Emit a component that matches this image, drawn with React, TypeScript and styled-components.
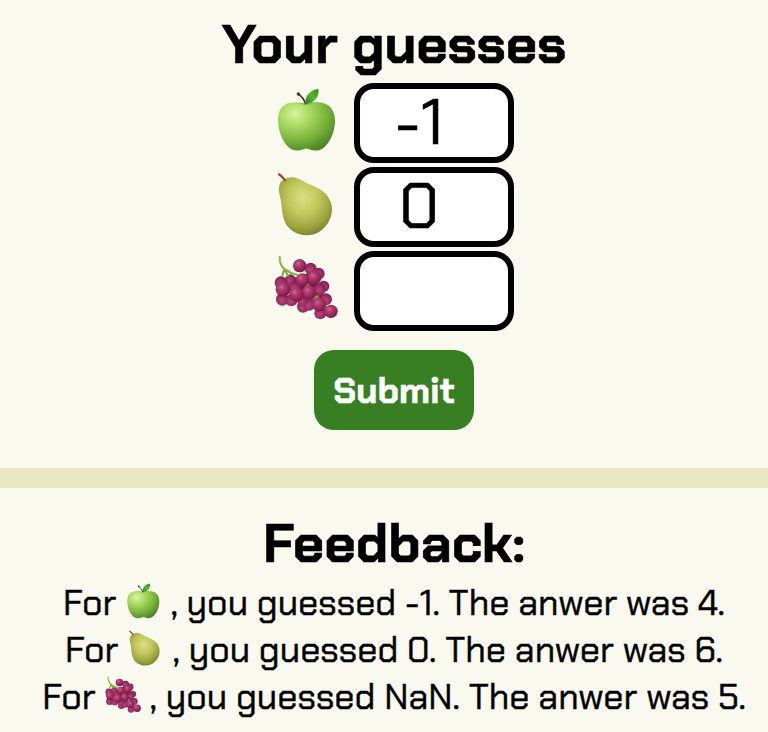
import React from "react";
import styled, { createGlobalStyle } from "styled-components";

const GlobalStyle = createGlobalStyle`
  html, body { margin: 0; padding: 0; background: #faf9f0; overflow: hidden; }
  * { box-sizing: border-box; }
`;

const Page = styled.main`
  width: 788px;
  height: 732px;
  overflow: hidden;
  color: #000;
  background: #faf9f0;
  font-family: "Chakra Petch", Roboto, "Liberation Sans", sans-serif;
`;

const Guesses = styled.section`
  height: 468px;
  display: flex;
  flex-direction: column;
  align-items: center;
`;

const Title = styled.h2<{ $top: number }>`
  margin: ${(p) => p.$top}px 0 0;
  height: 70px;
  font-size: 54px;
  line-height: 70px;
  font-weight: 700;
  white-space: nowrap;
  -webkit-text-stroke: 0.6px #000;
`;

const Rows = styled.div`
  display: flex;
  flex-direction: column;
  gap: 4px;
  margin: 3px 0 19px;
  width: 240px;
`;

const Row = styled.label`
  display: flex;
  justify-content: space-between;
  height: 80px;
`;

const RowIcon = styled.span`
  display: block;
  height: 64px;
  margin-top: 5px;
`;

const NumberField = styled.input`
  width: 160px;
  height: 80px;
  padding: 0 30px 2px 0;
  border: 6px solid #000;
  border-radius: 20px;
  background: #fff;
  color: #000;
  outline: none;
  text-align: center;
  font-family: inherit;
  font-size: 64px;
  -webkit-text-stroke: 0.6px #000;
`;

const Submit = styled.button`
  width: 160px;
  height: 80px;
  padding: 0;
  border: 0;
  border-radius: 20px;
  background: #377f22;
  color: #fff;
  font-family: inherit;
  font-size: 36px;
  font-weight: 700;
  -webkit-text-stroke: 0.5px #fff;
`;

const Feedback = styled.section`
  border-top: 20px solid #ebe7c3;
  display: flex;
  flex-direction: column;
  align-items: center;
`;

const Line = styled.p`
  margin: 0;
  height: 47px;
  display: flex;
  align-items: center;
  white-space: pre;
  font-size: 36px;
  line-height: 47px;
  -webkit-text-stroke: 0.5px #000;
`;

const Drawing = styled.svg<{ $size: number }>`
  display: block;
  width: ${(p) => p.$size}px;
  height: ${(p) => p.$size}px;
  overflow: visible;
`;

const InlineIcon = styled.span`
  margin: 0 9px 4px 9px;
`;

type FruitName = "apple" | "pear" | "grapes";

function Apple({ size }: { size: number }) {
  return (
    <Drawing $size={size} viewBox="27 24 192 192" aria-label="green apple">
      <defs>
        <radialGradient id="appleSkin" cx="30%" cy="24%" r="82%">
          <stop offset="0" stopColor="#d9f3a0" />
          <stop offset=".28" stopColor="#afdc68" />
          <stop offset=".65" stopColor="#7db73d" />
          <stop offset="1" stopColor="#4d8525" />
        </radialGradient>
        <linearGradient id="appleLeaf" x1="0" y1="1" x2="1" y2="0">
          <stop offset="0" stopColor="#267d16" />
          <stop offset=".5" stopColor="#59b934" />
          <stop offset="1" stopColor="#328d1d" />
        </linearGradient>
      </defs>
      <path d="M123 72C136 66 156 64 174 69C198 75 210 97 210 122C210 151 198 184 176 203C163 215 145 213 132 207Q124 204 115 208C99 214 84 213 71 202C51 184 39 150 39 118C39 94 50 74 73 69C94 64 111 67 123 72Z" fill="url(#appleSkin)" />
      <path d="M100 70Q124 80 149 69Q136 68 123 72Q112 68 100 70Z" fill="#619e31" opacity=".45" />
      <path d="M122 73Q117 54 100 42" fill="none" stroke="#633022" strokeWidth="5" />
      <circle cx="100" cy="42" r="5" fill="#542a20" />
      <path d="M121 73C119 45 135 31 160 26C164 50 150 68 121 73Z" fill="url(#appleLeaf)" />
      <path d="M125 69Q140 56 153 35" fill="none" stroke="#2c8b1d" strokeWidth="1.5" opacity=".7" />
    </Drawing>
  );
}

function Pear({ size }: { size: number }) {
  return (
    <Drawing $size={size} viewBox="27 21 192 192" aria-label="pear">
      <defs>
        <radialGradient id="pearSkin" cx="46%" cy="36%" r="67%">
          <stop offset="0" stopColor="#dddf82" />
          <stop offset=".42" stopColor="#c1c85c" />
          <stop offset=".75" stopColor="#a0a63f" />
          <stop offset="1" stopColor="#7b812c" />
        </radialGradient>
      </defs>
      <path d="M43 62C47 43 69 34 91 38C107 41 116 51 134 58C160 69 188 83 197 111C210 145 190 187 157 204C128 217 91 211 70 187C53 167 51 139 49 115C47 94 38 79 43 62Z" fill="url(#pearSkin)" />
      <path d="M60 46Q51 34 42 28" fill="none" stroke="#a4552b" strokeWidth="7" strokeLinecap="round" />
      <path d="M59 45Q52 36 43 30" fill="none" stroke="#743b23" strokeWidth="2" strokeLinecap="round" />
      {[[82, 91], [106, 83], [92, 115], [123, 104], [139, 121], [111, 137], [85, 144], [149, 149], [123, 163], [94, 175]].map(([x, y]) => (
        <circle key={`${x}-${y}`} cx={x} cy={y} r="1" fill="#878b30" opacity=".55" />
      ))}
    </Drawing>
  );
}

const BACK_BERRIES = [
  [137, 62, 18], [161, 77, 18], [52, 154, 19], [79, 157, 18],
  [76, 95, 16], [48, 104, 19], [176, 115, 17], [164, 124, 18],
  [88, 118, 18], [114, 176, 18], [166, 196, 18], [132, 168, 20],
  [183, 154, 18], [112, 160, 15], [152, 148, 14],
];

const FRONT_BERRIES = [
  [104, 53, 20], [148, 89, 21], [112, 96, 20], [132, 133, 21],
  [54, 124, 22], [94, 139, 22], [163, 170, 21], [198, 190, 20],
];

const Berries = ({ list, fill }: { list: number[][]; fill: string }) => (
  <>
    {list.map(([x, y, r]) => (
      <circle key={`${x}-${y}`} cx={x} cy={y} r={r} fill={fill} />
    ))}
  </>
);

function Grapes({ size }: { size: number }) {
  return (
    <Drawing $size={size} viewBox="27 24 192 192" aria-label="grapes">
      <defs>
        <radialGradient id="berryFront" cx="38%" cy="34%" r="68%">
          <stop offset="0" stopColor="#cf6895" />
          <stop offset=".3" stopColor="#b43d70" />
          <stop offset=".7" stopColor="#972759" />
          <stop offset="1" stopColor="#741a45" />
        </radialGradient>
        <radialGradient id="berryBack" cx="45%" cy="58%" r="65%">
          <stop offset="0" stopColor="#b5487b" />
          <stop offset=".55" stopColor="#9c2f62" />
          <stop offset="1" stopColor="#711943" />
        </radialGradient>
      </defs>
      <path d="M86 90L145 70L165 120L185 160L160 190L115 155L78 145Z" fill="#6f1b43" />
      <Berries list={BACK_BERRIES} fill="url(#berryBack)" />
      <path d="M44 27Q43 52 61 65Q78 77 96 80M58 63L52 82M60 66L69 84M96 92L103 84M122 113L130 109M151 149L158 145" fill="none" stroke="#79ad39" strokeWidth="6" strokeLinecap="round" />
      <path d="M43 28Q45 51 63 64Q78 74 92 78" fill="none" stroke="#a9cc58" strokeWidth="2" />
      <Berries list={FRONT_BERRIES} fill="url(#berryFront)" />
    </Drawing>
  );
}

function Fruit({ name, size }: { name: FruitName; size: number }) {
  if (name === "apple") return <Apple size={size} />;
  if (name === "pear") return <Pear size={size} />;
  return <Grapes size={size} />;
}

const ITEMS: { name: FruitName; value: string; guess: string; answer: number }[] = [
  { name: "apple", value: "-1", guess: "-1", answer: 4 },
  { name: "pear", value: "0", guess: "0", answer: 6 },
  { name: "grapes", value: "", guess: "NaN", answer: 5 },
];

export default function App() {
  return (
    <>
      <GlobalStyle />
      <Page>
        <Guesses>
          <Title $top={10}>Your guesses</Title>
          <Rows>
            {ITEMS.map((item) => (
              <Row key={item.name}>
                <RowIcon><Fruit name={item.name} size={64} /></RowIcon>
                <NumberField defaultValue={item.value} aria-label={item.name} />
              </Row>
            ))}
          </Rows>
          <Submit>Submit</Submit>
        </Guesses>
        <Feedback>
          <Title $top={21}>Feedback:</Title>
          {ITEMS.map((item) => (
            <Line key={item.name}>
              <span>For</span>
              <InlineIcon><Fruit name={item.name} size={36} /></InlineIcon>
              <span>{`, you guessed ${item.guess}. The anwer was ${item.answer}.`}</span>
            </Line>
          ))}
        </Feedback>
      </Page>
    </>
  );
}
